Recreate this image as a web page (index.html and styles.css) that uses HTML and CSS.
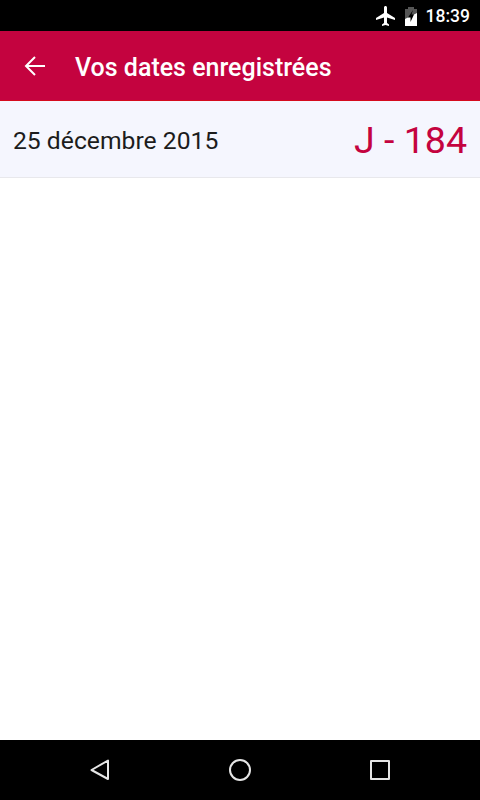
FILE: index.html
```
<html>
    <head>
        <title>Vos dates</title>
        <link rel="stylesheet" href="styles.css">
    </head>
    <body>
        <div class="status">
            <svg class="status__plane" viewBox="0 0 24 24" width="24" height="24">
                <path fill="#fff" d="M21 16v-2l-8-5V3.500C13 2.670 12.330 2 11.500 2S10 2.670 10 3.500V9l-8 5v2l8-2.500V19l-2 1.500V22l3.500-1 3.500 1v-1.500L13 19v-5.500z"/>
            </svg>
            <svg class="status__battery" viewBox="0 0 14 20" width="14" height="20">
                <path fill="#555" d="M4 1h6v2h3v17H1V3h3z"/>
                <path fill="#fff" d="M1 20V13L13 7V20z"/>
                <path fill="#000" d="M9 4L4 11.500h2.500V16L10 8.500H7.500z"/>
            </svg>
            <span class="status__time">18:39</span>
        </div>

        <header class="bar">
            <svg class="bar__back" viewBox="0 0 24 24" width="24" height="24">
                <path fill="none" stroke="#fff" stroke-width="2" d="M22 12H3M12 3l-9 9 9 9"/>
            </svg>
            <h1 class="bar__title">Vos dates enregistrées</h1>
        </header>

        <main class="list">
            <div class="row">
                <span class="row__date">25 décembre 2015</span>
                <span class="row__count">J - 184</span>
            </div>
        </main>

        <nav class="nav">
            <svg viewBox="0 0 24 24" width="24" height="24">
                <path fill="none" stroke="#e6e6e6" stroke-width="2" stroke-linejoin="round" d="M20 2.500V21L3.500 12z"/>
            </svg>
            <svg viewBox="0 0 24 24" width="24" height="24">
                <circle cx="12" cy="12" r="10" fill="none" stroke="#e6e6e6" stroke-width="2"/>
            </svg>
            <svg viewBox="0 0 24 24" width="24" height="24">
                <rect x="3" y="3" width="18" height="18" fill="none" stroke="#e6e6e6" stroke-width="2" stroke-linejoin="round"/>
            </svg>
        </nav>
    </body>
</html>
```
FILE: styles.css
```
* {
    box-sizing: border-box;
    margin: 0;
    padding: 0;
}
body {
    background-color: #fff;
    font-family: Roboto, sans-serif;
    height: 800px;
    display: flex;
    flex-direction: column;
    overflow: hidden;
}
.status {
    background-color: #000;
    height: 31px;
    flex: none;
    display: flex;
    align-items: center;
    justify-content: flex-end;
    padding-right: 10px;
    color: #fff;
}
.status__plane {
    margin-right: 6px;
}
.status__battery {
    margin-right: 8px;
}
.status__time {
    font-size: 17.5px;
    font-weight: 500;
}
.bar {
    background-color: #c4033f;
    height: 70px;
    flex: none;
    display: flex;
    align-items: center;
    padding-left: 23px;
    border-bottom: 1px solid #d50a1e;
}
.bar__back {
    margin-right: 28px;
    margin-top: 1px;
}
.bar__title {
    color: #fff;
    font-size: 25px;
    font-weight: 500;
    padding-top: 3px;
}
.list {
    flex: 1;
}
.row {
    background-color: #f5f6fe;
    height: 77px;
    display: flex;
    align-items: center;
    justify-content: space-between;
    padding: 0 13px;
    border-bottom: 1px solid #e8e8ec;
}
.row__date {
    color: #1c1c1c;
    font-size: 24.7px;
    padding-top: 2px;
}
.row__count {
    color: #c4033f;
    font-size: 37.6px;
    padding-top: 2px;
}
.nav {
    background-color: #000;
    height: 60px;
    flex: none;
    display: flex;
    align-items: center;
    justify-content: space-between;
    padding: 0 88px;
}
```
